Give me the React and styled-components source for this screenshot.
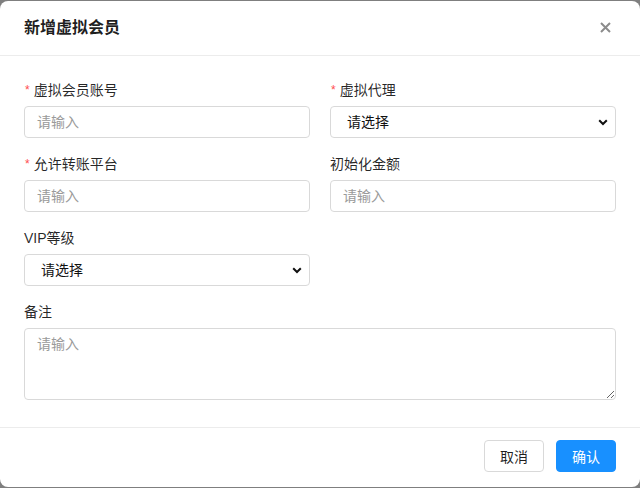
import React, { useState } from "react";
import styled, { createGlobalStyle } from "styled-components";

const GlobalStyle = createGlobalStyle`
  html, body {
    margin: 0;
    padding: 0;
    background: #7f7f7f;
  }
  body {
    font-family: "Liberation Sans", "Noto Sans CJK SC", sans-serif;
  }
  * { box-sizing: border-box; }
`;

const Modal = styled.div`
  margin-top: 1px;
  height: 486px;
  background: #fff;
  border-radius: 8px;
  display: flex;
  flex-direction: column;
  overflow: hidden;
`;

const Header = styled.div`
  display: flex;
  align-items: center;
  justify-content: space-between;
  padding: 16px 24px;
  border-bottom: 1px solid #ececec;
`;

const Title = styled.h3`
  margin: 0;
  font-size: 16px;
  line-height: 22px;
  font-weight: 700;
  color: rgba(0, 0, 0, 0.88);
`;

const Close = styled.button`
  border: none;
  background: none;
  padding: 0;
  width: 22px;
  height: 22px;
  display: flex;
  align-items: center;
  justify-content: center;
  cursor: pointer;
  color: #8c8c8c;
  margin-right: 0;
  margin-top: -2px;
`;

const Body = styled.div`
  flex: 1;
  padding: 23px 24px 27px;
  display: grid;
  grid-template-columns: 1fr 1fr;
  column-gap: 20px;
  row-gap: 15px;
  align-content: start;
`;

const Item = styled.div`
  display: flex;
  flex-direction: column;
  grid-column: ${({ $full }) => ($full ? "1 / -1" : "auto")};
`;

const Label = styled.label`
  font-size: 14px;
  line-height: 22px;
  color: rgba(0, 0, 0, 0.85);
  margin-bottom: 5px;
  display: flex;
  align-items: center;
`;

const Star = styled.span`
  color: #ff4d4f;
  font-size: 12px;
  margin-right: 4px;
  margin-left: 1px;
  font-family: "Liberation Sans", sans-serif;
`;

const Input = styled.input`
  height: 32px;
  width: 100%;
  border: 1px solid #d9d9d9;
  border-radius: 4px;
  padding: 4px 12px;
  font-size: 14px;
  font-family: inherit;
  color: rgba(0, 0, 0, 0.85);
  outline: none;
  &::placeholder {
    color: #9a9a9a;
  }
`;

const SelectWrap = styled.div`
  position: relative;
`;

const Select = styled.select`
  appearance: none;
  height: 32px;
  width: 100%;
  border: 1px solid #d9d9d9;
  border-radius: 4px;
  padding: 4px 16px;
  font-size: 14px;
  font-family: inherit;
  color: #111;
  background: #fff;
  outline: none;
`;

const Chevron = styled.svg`
  position: absolute;
  right: 8px;
  top: 13px;
  pointer-events: none;
`;

const TextArea = styled.textarea`
  height: 72px;
  width: 100%;
  border: 1px solid #d9d9d9;
  border-radius: 4px;
  padding: 4px 12px;
  font-size: 14px;
  line-height: 22px;
  font-family: inherit;
  color: rgba(0, 0, 0, 0.85);
  outline: none;
  resize: vertical;
  &::placeholder {
    color: #9a9a9a;
  }
`;

const Footer = styled.div`
  display: flex;
  justify-content: flex-end;
  gap: 12px;
  padding: 12px 24px 15px;
  border-top: 1px solid #ececec;
`;

const Button = styled.button`
  height: 32px;
  width: 60px;
  border-radius: 4px;
  font-size: 14px;
  font-family: inherit;
  cursor: pointer;
  border: 1px solid ${({ $primary }) => ($primary ? "#1890ff" : "#d9d9d9")};
  background: ${({ $primary }) => ($primary ? "#1890ff" : "#fff")};
  color: ${({ $primary }) => ($primary ? "#fff" : "rgba(0,0,0,0.88)")};
`;

function Field({ label, required, full, children }) {
  return (
    <Item $full={full}>
      <Label>
        {required && <Star>*</Star>}
        {label}
      </Label>
      {children}
    </Item>
  );
}

function Dropdown({ value, onChange }) {
  return (
    <SelectWrap>
      <Select value={value} onChange={(e) => onChange(e.target.value)}>
        <option value="">请选择</option>
      </Select>
      <Chevron width="10" height="7" viewBox="0 0 10 7">
        <path d="M1.2 1.2 5 5 8.8 1.2" fill="none" stroke="#111" strokeWidth="2" />
      </Chevron>
    </SelectWrap>
  );
}

const App = () => {
  const [agent, setAgent] = useState("");
  const [vip, setVip] = useState("");

  return (
    <>
      <GlobalStyle />
      <Modal>
        <Header>
          <Title>新增虚拟会员</Title>
          <Close aria-label="close">
            <svg width="11" height="11" viewBox="0 0 11 11">
              <path d="M1 1 10 10M10 1 1 10" stroke="#8c8c8c" strokeWidth="2" />
            </svg>
          </Close>
        </Header>
        <Body>
          <Field label="虚拟会员账号" required>
            <Input placeholder="请输入" />
          </Field>
          <Field label="虚拟代理" required>
            <Dropdown value={agent} onChange={setAgent} />
          </Field>
          <Field label="允许转账平台" required>
            <Input placeholder="请输入" />
          </Field>
          <Field label="初始化金额">
            <Input placeholder="请输入" />
          </Field>
          <Field label="VIP等级">
            <Dropdown value={vip} onChange={setVip} />
          </Field>
          <div />
          <Field label="备注" full>
            <TextArea placeholder="请输入" />
          </Field>
        </Body>
        <Footer>
          <Button>取消</Button>
          <Button $primary>确认</Button>
        </Footer>
      </Modal>
    </>
  );
};

export default App;
